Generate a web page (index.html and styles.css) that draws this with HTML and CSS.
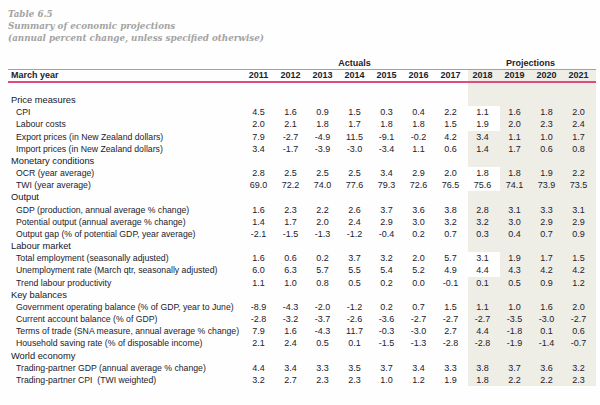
FILE: index.html
```html
<!DOCTYPE html>
<html>
<head>
<meta charset="utf-8">
<link rel="stylesheet" href="styles.css">
</head>
<body>
<div class="title">
  <div>Table 6.5</div>
  <div>Summary of economic projections</div>
  <div>(annual percent change, unless specified otherwise)</div>
</div>
<table class="tbl">
  <colgroup>
    <col class="c-label">
    <col span="11" class="c-num">
  </colgroup>
  <thead>
    <tr class="grp">
      <th></th>
      <th colspan="7">Actuals</th>
      <th colspan="4">Projections</th>
    </tr>
    <tr class="hdr">
      <th class="lab">March year</th>
      <th>2011</th><th>2012</th><th>2013</th><th>2014</th><th>2015</th><th>2016</th><th>2017</th>
      <th class="p">2018</th><th class="p">2019</th><th class="p">2020</th><th class="p">2021</th>
    </tr>
  </thead>
  <tbody>
    <tr class="spacer"><td></td><td></td><td></td><td></td><td></td><td></td><td></td><td></td><td class="p"></td><td class="p"></td><td class="p"></td><td class="p"></td></tr>

    <tr><td class="sec">Price measures</td><td></td><td></td><td></td><td></td><td></td><td></td><td></td><td class="p"></td><td class="p"></td><td class="p"></td><td class="p"></td></tr>
    <tr><td class="item">CPI</td><td>4.5</td><td>1.6</td><td>0.9</td><td>1.5</td><td>0.3</td><td>0.4</td><td>2.2</td><td class="w">1.1</td><td class="p">1.6</td><td class="p">1.8</td><td class="p">2.0</td></tr>
    <tr><td class="item">Labour costs</td><td>2.0</td><td>2.1</td><td>1.8</td><td>1.7</td><td>1.8</td><td>1.8</td><td>1.5</td><td class="w">1.9</td><td class="p">2.0</td><td class="p">2.3</td><td class="p">2.4</td></tr>
    <tr><td class="item">Export prices (in New Zealand dollars)</td><td>7.9</td><td>-2.7</td><td>-4.9</td><td>11.5</td><td>-9.1</td><td>-0.2</td><td>4.2</td><td class="p">3.4</td><td class="p">1.1</td><td class="p">1.0</td><td class="p">1.7</td></tr>
    <tr><td class="item">Import prices (in New Zealand dollars)</td><td>3.4</td><td>-1.7</td><td>-3.9</td><td>-3.0</td><td>-3.4</td><td>1.1</td><td>0.6</td><td class="p">1.4</td><td class="p">1.7</td><td class="p">0.6</td><td class="p">0.8</td></tr>

    <tr><td class="sec">Monetary conditions</td><td></td><td></td><td></td><td></td><td></td><td></td><td></td><td class="p"></td><td class="p"></td><td class="p"></td><td class="p"></td></tr>
    <tr><td class="item">OCR (year average)</td><td>2.8</td><td>2.5</td><td>2.5</td><td>2.5</td><td>3.4</td><td>2.9</td><td>2.0</td><td class="w">1.8</td><td class="p">1.8</td><td class="p">1.9</td><td class="p">2.2</td></tr>
    <tr><td class="item">TWI (year average)</td><td>69.0</td><td>72.2</td><td>74.0</td><td>77.6</td><td>79.3</td><td>72.6</td><td>76.5</td><td class="w">75.6</td><td class="p">74.1</td><td class="p">73.9</td><td class="p">73.5</td></tr>

    <tr><td class="sec">Output</td><td></td><td></td><td></td><td></td><td></td><td></td><td></td><td class="p"></td><td class="p"></td><td class="p"></td><td class="p"></td></tr>
    <tr><td class="item">GDP (production, annual average % change)</td><td>1.6</td><td>2.3</td><td>2.2</td><td>2.6</td><td>3.7</td><td>3.6</td><td>3.8</td><td class="p">2.8</td><td class="p">3.1</td><td class="p">3.3</td><td class="p">3.1</td></tr>
    <tr><td class="item">Potential output (annual average % change)</td><td>1.4</td><td>1.7</td><td>2.0</td><td>2.4</td><td>2.9</td><td>3.0</td><td>3.2</td><td class="p">3.2</td><td class="p">3.0</td><td class="p">2.9</td><td class="p">2.9</td></tr>
    <tr><td class="item">Output gap (% of potential GDP, year average)</td><td>-2.1</td><td>-1.5</td><td>-1.3</td><td>-1.2</td><td>-0.4</td><td>0.2</td><td>0.7</td><td class="p">0.3</td><td class="p">0.4</td><td class="p">0.7</td><td class="p">0.9</td></tr>

    <tr><td class="sec">Labour market</td><td></td><td></td><td></td><td></td><td></td><td></td><td></td><td class="p"></td><td class="p"></td><td class="p"></td><td class="p"></td></tr>
    <tr><td class="item">Total employment (seasonally adjusted)</td><td>1.6</td><td>0.6</td><td>0.2</td><td>3.7</td><td>3.2</td><td>2.0</td><td>5.7</td><td class="w">3.1</td><td class="p">1.9</td><td class="p">1.7</td><td class="p">1.5</td></tr>
    <tr><td class="item">Unemployment rate (March qtr, seasonally adjusted)</td><td>6.0</td><td>6.3</td><td>5.7</td><td>5.5</td><td>5.4</td><td>5.2</td><td>4.9</td><td class="w">4.4</td><td class="p">4.3</td><td class="p">4.2</td><td class="p">4.2</td></tr>
    <tr><td class="item">Trend labour productivity</td><td>1.1</td><td>1.0</td><td>0.8</td><td>0.5</td><td>0.2</td><td>0.0</td><td>-0.1</td><td class="p">0.1</td><td class="p">0.5</td><td class="p">0.9</td><td class="p">1.2</td></tr>

    <tr><td class="sec">Key balances</td><td></td><td></td><td></td><td></td><td></td><td></td><td></td><td class="p"></td><td class="p"></td><td class="p"></td><td class="p"></td></tr>
    <tr><td class="item">Government operating balance (% of GDP, year to June)</td><td>-8.9</td><td>-4.3</td><td>-2.0</td><td>-1.2</td><td>0.2</td><td>0.7</td><td>1.5</td><td class="p">1.1</td><td class="p">1.0</td><td class="p">1.6</td><td class="p">2.0</td></tr>
    <tr><td class="item">Current account balance (% of GDP)</td><td>-2.8</td><td>-3.2</td><td>-3.7</td><td>-2.6</td><td>-3.6</td><td>-2.7</td><td>-2.7</td><td class="p">-2.7</td><td class="p">-3.5</td><td class="p">-3.0</td><td class="p">-2.7</td></tr>
    <tr><td class="item">Terms of trade (SNA measure, annual average % change)</td><td>7.9</td><td>1.6</td><td>-4.3</td><td>11.7</td><td>-0.3</td><td>-3.0</td><td>2.7</td><td class="p">4.4</td><td class="p">-1.8</td><td class="p">0.1</td><td class="p">0.6</td></tr>
    <tr><td class="item">Household saving rate (% of disposable income)</td><td>2.1</td><td>2.4</td><td>0.5</td><td>0.1</td><td>-1.5</td><td>-1.3</td><td>-2.8</td><td class="p">-2.8</td><td class="p">-1.9</td><td class="p">-1.4</td><td class="p">-0.7</td></tr>

    <tr><td class="sec">World economy</td><td></td><td></td><td></td><td></td><td></td><td></td><td></td><td class="p"></td><td class="p"></td><td class="p"></td><td class="p"></td></tr>
    <tr><td class="item">Trading-partner GDP (annual average % change)</td><td>4.4</td><td>3.4</td><td>3.3</td><td>3.5</td><td>3.7</td><td>3.4</td><td>3.3</td><td class="p">3.8</td><td class="p">3.7</td><td class="p">3.6</td><td class="p">3.2</td></tr>
    <tr><td class="item">Trading-partner CPI&nbsp; (TWI weighted)</td><td>3.2</td><td>2.7</td><td>2.3</td><td>2.3</td><td>1.0</td><td>1.2</td><td>1.9</td><td class="p">1.8</td><td class="p">2.2</td><td class="p">2.2</td><td class="p">2.3</td></tr>
  </tbody>
</table>
</body>
</html>
```

FILE: styles.css
```css
html, body {
  margin: 0;
  padding: 0;
  background: #fefefe;
}
body {
  padding: 8px;
}
.title {
  font-family: "DejaVu Serif", "Liberation Serif", serif;
  font-style: italic;
  font-weight: bold;
  font-size: 8.75px;
  line-height: 12px;
  color: #a3a3a3;
  margin-bottom: 13px;
}
.tbl {
  border-collapse: collapse;
  table-layout: fixed;
  width: 588px;
  font-family: "Liberation Sans", Arial, sans-serif;
  font-size: 9px;
  color: #22222c;
}
.c-label { width: 236px; }
.c-num { width: 32px; }
.tbl th, .tbl td {
  padding: 0 3px 0 0;
  text-align: center;
  white-space: nowrap;
  line-height: 12.17px;
  height: 12.17px;
  font-weight: normal;
}
.grp th {
  font-weight: bold;
  line-height: 12px;
  height: 12px;
  vertical-align: middle;
}
.hdr th {
  font-weight: bold;
  line-height: 11px;
  height: 11px;
  border-top: 1px solid #ec7aa2;
  border-bottom: 2px solid #e3487f;
}
.tbl .lab {
  text-align: left;
  padding-left: 3px;
}
.spacer td {
  height: 11px;
  line-height: 11px;
}
.tbl .sec {
  text-align: left;
  padding-left: 3px;
  font-size: 9.3px;
  color: #16161e;
}
.tbl .item {
  text-align: left;
  padding-left: 8px;
  font-size: 8.7px;
}
.tbl .p {
  background: #eeeee7;
}
.tbl .w {
  background: #ffffff;
}
```
